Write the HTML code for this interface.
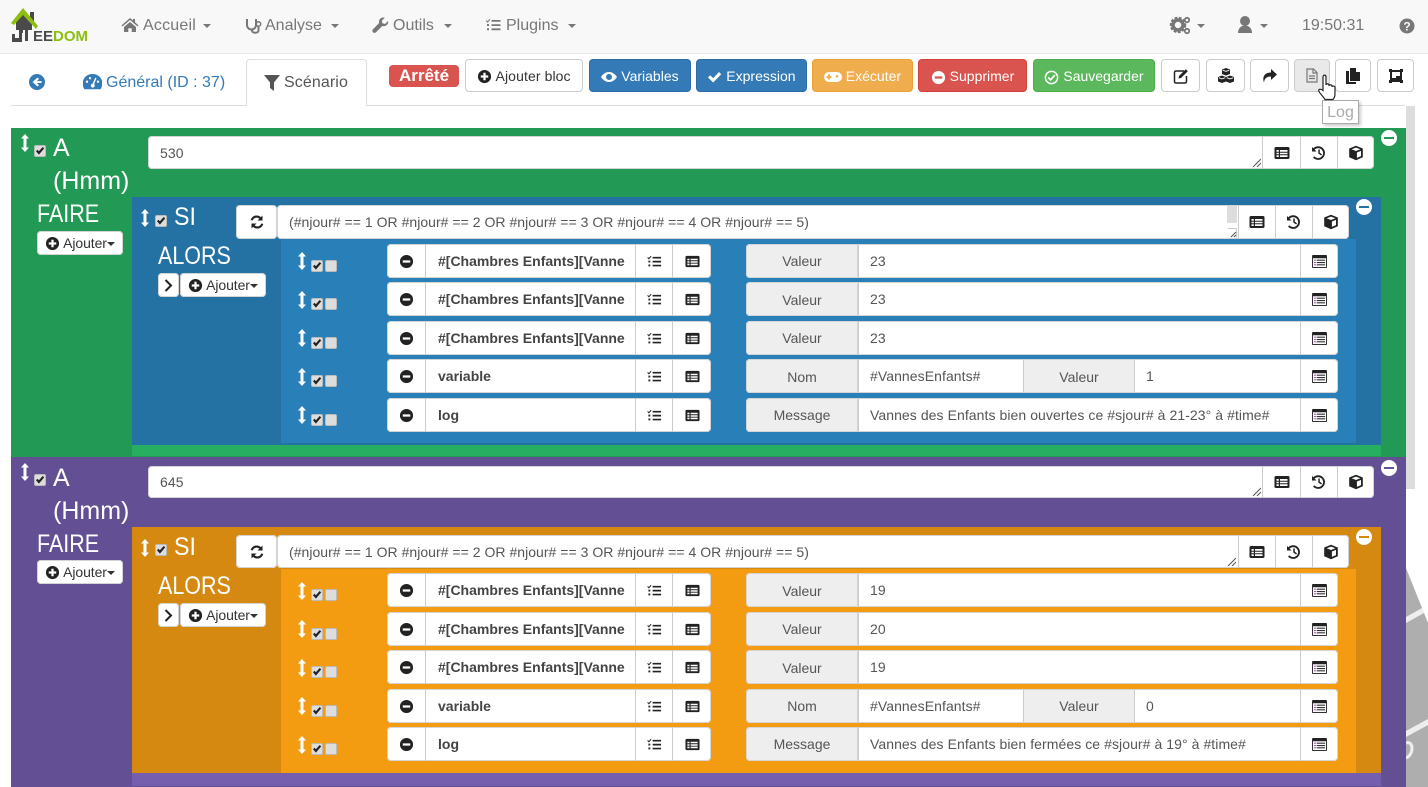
<!DOCTYPE html>
<html><head><meta charset="utf-8"><style>
html,body{margin:0;padding:0;width:1428px;height:787px;overflow:hidden;background:#fff}
body{position:relative;font-family:"Liberation Sans",sans-serif;font-size:14px;color:#555}
.a,.b,.t,.l,.i,.ck,.ar,.row{position:absolute;box-sizing:border-box}
.t{white-space:nowrap}
.b{background:#fff;border:1px solid #ccc;border-radius:4px;color:#333;text-align:center;white-space:nowrap}
.b svg{display:inline-block;vertical-align:middle}
.w{background:#fff;border-radius:4px;box-shadow:inset 0 0 0 1px #d4d4d4}
.s{position:absolute;box-sizing:border-box;border-left:1px solid #ccc;top:0;bottom:0;display:flex;align-items:center;justify-content:center}
.ic{width:16px;height:16px;fill:#222;display:block}
.l{background:#eee;top:0;bottom:0;border-left:1px solid #ccc;text-align:center;line-height:34px;color:#555}
.i{top:0;line-height:35px;padding-left:11px;color:#555;white-space:nowrap;overflow:hidden;letter-spacing:.07px}
.ck{width:12px;height:12px;background:#ddd;border:1px solid #bbb;border-radius:2px}
.ck svg{position:absolute;left:0;top:0;width:10px;height:10px;fill:#222}
.ar{width:10px;height:18px;fill:#fff}
.h{color:#fff;font-size:25px;line-height:30px;position:absolute;white-space:nowrap}
.n{transform:scaleX(.86);transform-origin:left center}
.row{left:0;width:1428px;height:34px}
.row>.g{position:absolute;top:0;height:34px}
.nav{color:#777;font-size:16px}
.btn{height:33px;top:59px;line-height:32px;color:#fff;border:1px solid transparent;font-size:14px}
.mc{position:absolute;width:16px;height:16px}
.aj{width:86px;height:24px;line-height:24px;border:0;box-shadow:inset 0 0 0 1px #d4d4d4;font-size:14px;letter-spacing:-.1px}
.aj svg{width:15px;height:15px;margin-top:-2px;fill:#222}
.cr{display:inline-block;border:4px solid transparent;border-top-color:#333;border-bottom:0;vertical-align:middle}
.lo{line-height:36px}
</style></head><body>
<svg width="0" height="0" style="position:absolute"><defs>
<symbol id="minus" viewBox="0 0 16 16"><path d="M8 1a7 7 0 1 0 0 14A7 7 0 0 0 8 1zM4 6.8h8v2.4H4z" fill-rule="evenodd"/></symbol>
<symbol id="plus" viewBox="0 0 16 16"><path d="M8 1a7 7 0 1 0 0 14A7 7 0 0 0 8 1zM6.8 4h2.4v2.8H12v2.4H9.200V12H6.800V9.200H4V6.800h2.800z" fill-rule="evenodd"/></symbol>
<symbol id="tasks" viewBox="0 0 16 16"><path d="M6 3h9v1.800H6zM6 7.200h9V9H6zM6 11.400h9v1.800H6zM1 3.200l1 1 2-2.200.8.700L2 5.800.3 4zM1.500 7h2v2h-2zM1.500 11.200h2v2h-2z"/></symbol>
<symbol id="list" viewBox="0 0 16 16"><path d="M2 2h12a1.500 1.500 0 0 1 1.500 1.500v9A1.500 1.500 0 0 1 14 14H2a1.500 1.500 0 0 1-1.500-1.500v-9A1.500 1.500 0 0 1 2 2zM2.500 5v1.700h2.300V5zM6 5v1.700h7.500V5zM2.500 7.700v1.600h2.300V7.700zM6 7.700v1.600h7.500V7.700zM2.500 10.300V12h2.300v-1.700zM6 10.300V12h7.500v-1.700z" fill-rule="evenodd"/></symbol>
<symbol id="hist" viewBox="0 0 16 16"><path d="M1 2l1.300 1.300A6.800 6.800 0 1 1 2 12.500l1.400-1.100A5 5 0 1 0 3.600 4.600L5.500 6.500H1zM7.300 4.500h1.500v3.200l2.200 1.600-.9 1.200-2.800-2z"/></symbol>
<symbol id="cube" viewBox="0 0 16 16"><path d="M8 .8l6.800 2.700v8.800L8 15.200l-6.800-2.900V3.500zM8 2.600L3.600 4.300 8 6l4.400-1.700zM8.900 7.500v5.400l4.100-1.800V5.900z" fill-rule="evenodd"/></symbol>
<symbol id="arrow" viewBox="0 0 10 18"><path d="M5 0l4 4.500H6.500v9H9L5 18l-4-4.500h2.500v-9H1z"/></symbol>
<symbol id="check" viewBox="0 0 10 10"><path d="M1 5.200l1.500-1.400 1.400 1.500L7.700 1 9.200 2.400 3.900 8.600z"/></symbol>
<symbol id="cal" viewBox="0 0 16 14"><rect x="0" y="0" width="16" height="14" rx="1" fill="#222"/><rect x="1" y="3.500" width="14" height="9.500" fill="#fff"/><path d="M2.300 5h1.700v1.200H2.300zM2.300 7.500h1.700v1.200H2.300zM2.300 10h1.700v1.200H2.300z" fill="#a02ba0"/><path d="M5 5h9v1.200H5zM5 7.500h9v1.200H5zM5 10h9v1.200H5z" fill="#333"/></symbol>
<symbol id="sync" viewBox="0 0 16 16"><path d="M13.500 1.500v5h-5l1.900-1.900A4.200 4.200 0 0 0 3.700 6.500L1.700 6a6.200 6.200 0 0 1 10.200-2.900zM2.500 14.500v-5h5l-1.900 1.900a4.200 4.200 0 0 0 6.700-1.900l2 .5a6.200 6.200 0 0 1-10.200 2.900z"/></symbol>
</defs></svg>

<!-- navbar -->
<div class="a" style="left:0;top:0;width:1428px;height:54px;background:#f8f8f8;border-bottom:1px solid #e7e7e7"></div>
<svg class="a" style="left:10px;top:8px" width="80" height="38" viewBox="0 0 80 38">
<path d="M6 12L13 6l9 9v7H13v3h-2v-3H6z" fill="#4a4a4a"/><rect x="20" y="4" width="4" height="12" fill="#4a4a4a"/>
<path d="M1 15L13 0l15 18-2 3L13 7 4 17z" fill="#8cbf0f"/>
<path d="M2 26h3v4h4V17h3v17H2z" fill="#4a4a4a"/><rect x="9" y="13" width="3" height="3" fill="#4a4a4a"/>
<path d="M15 22h3v11h-3z" fill="#4a4a4a"/>
<text x="23" y="33" font-family="Liberation Sans" font-weight="bold" font-size="15" fill="#4a4a4a" textLength="20">EE</text>
<text x="43" y="33" font-family="Liberation Sans" font-weight="bold" font-size="15" fill="#8cbf0f" textLength="35">DOM</text>
</svg>
<svg class="a" style="left:121px;top:17px;fill:#777" width="18" height="16" viewBox="0 0 18 16"><path d="M9 1l3 2.600V2h2v3.300L17.500 8.400l-1 1L9 3 1.500 9.400l-1-1zM3 10l6-5 6 5v5h-4.300v-3.800H7.300V15H3z"/></svg>
<div class="t nav" style="left:143px;top:16px;line-height:20px;letter-spacing:.2px">Accueil</div>
<svg class="a" style="left:245px;top:17px" width="18" height="17" viewBox="0 0 18 17"><path d="M2 2v6a4.500 4.500 0 0 0 9 0V2M7 12.500v1c0 3 6.500 3 6.500 0V9" fill="none" stroke="#777" stroke-width="2"/><circle cx="13.500" cy="7" r="2.200" fill="none" stroke="#777" stroke-width="1.500"/></svg>
<div class="t nav" style="left:265px;top:16px;line-height:20px">Analyse</div>
<svg class="a" style="left:372px;top:17px;fill:#777" width="17" height="17" viewBox="0 0 17 17"><path d="M16 4l-3 3-2.500-.7L9.800 3.800l3-3C10 0 7.500 1.200 7 4c-.1.800 0 1.500.1 2L1 12.200a2.100 2.100 0 0 0 3 3L10.200 9c3 .9 6.800-1.300 5.800-5z"/></svg>
<div class="t nav" style="left:393px;top:16px;line-height:20px">Outils</div>
<svg class="a" style="left:485px;top:17px;fill:#777" width="17" height="16" viewBox="0 0 16 16"><use href="#tasks"/></svg>
<div class="t nav" style="left:506px;top:16px;line-height:20px">Plugins</div>
<svg class="a" style="left:0;top:0;fill:#777" width="1428" height="54"><path d="M203 24h8l-4 4zM331 24h8l-4 4zM444 24h8l-4 4zM568 24h8l-4 4zM1197 24h8l-4 4zM1260 24h8l-4 4z"/>
<circle cx="1178" cy="25" r="6.500" fill="none" stroke="#777" stroke-width="3.500" stroke-dasharray="2.500 1.400"/><circle cx="1178" cy="25" r="5" fill="none" stroke="#777" stroke-width="3.500"/><circle cx="1187" cy="20" r="2.200" fill="none" stroke="#777" stroke-width="1.800"/><circle cx="1187" cy="31" r="2.200" fill="none" stroke="#777" stroke-width="1.800"/>
<circle cx="1245" cy="21" r="5"/><path d="M1238 33c0-10 14-10 14 0z"/>
<circle cx="1407" cy="26" r="7.500"/><text x="1407" y="30.500" text-anchor="middle" font-family="Liberation Sans" font-weight="bold" font-size="12" fill="#f8f8f8">?</text></svg>
<div class="t" style="left:1302px;top:16px;font-size:16px;line-height:20px;color:#777">19:50:31</div>

<!-- tabs -->
<div class="a" style="left:11px;top:105px;width:1394px;height:1px;background:#ddd"></div>
<div class="a" style="left:246px;top:59px;width:121px;height:47px;background:#fff;border:1px solid #ddd;border-bottom:0;border-radius:4px 4px 0 0"></div>
<svg class="a" style="left:29px;top:74px;fill:#337ab7" width="16" height="16" viewBox="0 0 16 16"><path d="M8 0a8 8 0 1 0 0 16A8 8 0 0 0 8 0zM8.500 3.500L10 5 7.800 7H12.500v2H7.800L10 11l-1.500 1.500L3.500 8z" fill-rule="evenodd"/></svg>
<svg class="a" style="left:83px;top:74px;fill:#337ab7" width="19" height="16" viewBox="0 0 19 16"><path d="M9.500 0A9.500 9.500 0 0 0 1.500 15.200h16A9.500 9.500 0 0 0 9.500 0zM4 6.500a1.200 1.200 0 1 1 0 2.400 1.200 1.200 0 0 1 0-2.400zM7 3a1.200 1.200 0 1 1 0 2.400A1.200 1.200 0 0 1 7 3zM15 6.500a1.200 1.200 0 1 1 0 2.400 1.200 1.200 0 0 1 0-2.400zM12.300 3.500l1.200.6-2.400 6a2 2 0 1 1-1.400-.5z" fill-rule="evenodd"/></svg>
<div class="t" style="left:106px;top:73px;font-size:16px;line-height:20px;color:#337ab7">Général (ID : 37)</div>
<svg class="a" style="left:264px;top:75px;fill:#555" width="16" height="16" viewBox="0 0 16 16"><path d="M0 0h16L10 7.500V16l-4-3V7.500z"/></svg>
<div class="t" style="left:284px;top:73px;font-size:16px;line-height:20px;color:#555;letter-spacing:.1px">Scénario</div>

<!-- toolbar -->
<div class="a" style="left:389px;top:65px;width:70px;height:22px;background:#d9534f;border-radius:4px;color:#fff;font-weight:bold;font-size:17px;line-height:22px;text-align:center">Arrêté</div>
<div class="b" style="left:465px;top:59px;width:118px;height:33px;line-height:32px;letter-spacing:.1px"><svg class="ic" style="display:inline-block;width:15px;height:15px;margin-top:-2px"><use href="#plus"/></svg> Ajouter bloc</div>
<div class="b btn" style="left:589px;width:102px;background:#337ab7;border-color:#2e6da4"><svg width="16" height="14" viewBox="0 0 16 14" fill="#fff"><path d="M8 2C4.500 2 1.500 4.500 0 7c1.500 2.500 4.500 5 8 5s6.500-2.500 8-5c-1.500-2.500-4.500-5-8-5zm0 8a3 3 0 1 1 0-6 3 3 0 0 1 0 6z"/></svg> Variables</div>
<div class="b btn" style="left:696px;width:111px;background:#337ab7;border-color:#2e6da4"><svg width="15" height="14" viewBox="0 0 15 14" fill="#fff"><path d="M1 7.500L3.200 5.300l3 3L12 2l2.200 2.200-8 8.300z"/></svg> Expression</div>
<div class="b btn" style="left:812px;width:101px;background:#f0ad4e;border-color:#eea236"><svg width="18" height="12" viewBox="0 0 18 12" fill="#fff"><path d="M5 1h8a5 5 0 0 1 0 10H5A5 5 0 0 1 5 1zM4 5H2.500v2H4v1.500h2V7h1.500V5H6V3.500H4zM13 4a1.300 1.300 0 1 0 0 2.600A1.300 1.300 0 0 0 13 4z" fill-rule="evenodd"/></svg> Exécuter</div>
<div class="b btn" style="left:918px;width:109px;background:#d9534f;border-color:#d43f3a"><svg width="15" height="15" viewBox="0 0 16 16" fill="#fff"><use href="#minus"/></svg> Supprimer</div>
<div class="b btn" style="left:1033px;width:122px;background:#5cb85c;border-color:#4cae4c"><svg width="15" height="15" viewBox="0 0 16 16"><circle cx="8" cy="8" r="6.500" fill="none" stroke="#fff" stroke-width="1.600"/><path d="M4.500 8l2.500 2.500 4.500-5" fill="none" stroke="#fff" stroke-width="1.800"/></svg> Sauvegarder</div>
<div class="b" style="left:1161px;top:59px;width:39px;height:33px;display:flex;align-items:center;justify-content:center"><svg width="16" height="16" viewBox="0 0 16 16"><path d="M11 3H3a1.500 1.500 0 0 0-1.500 1.500v9A1.500 1.500 0 0 0 3 15h9a1.500 1.500 0 0 0 1.500-1.500V8" fill="none" stroke="#222" stroke-width="1.500"/><path d="M6 8L12.800 1.200l2 2L8 10l-2.500.5z" fill="#222"/></svg></div>
<div class="b" style="left:1206px;top:59px;width:39px;height:33px;display:flex;align-items:center;justify-content:center"><svg width="16" height="15" viewBox="0 0 16 15"><path d="M8 0l4 1.500V6L8 7.500 4 6V1.500zM4 7.500L8 9v4.500L4 15 0 13.500V9zM12 7.500L16 9v4.500L12 15l-4-1.500V9z" fill="#222"/><path d="M4.800 2.200L8 3.400l3.200-1.200M.8 9.700L4 10.900l3.200-1.200M8.800 9.700l3.200 1.200 3.200-1.200" fill="none" stroke="#fff" stroke-width=".9"/></svg></div>
<div class="b" style="left:1250px;top:59px;width:39px;height:33px;display:flex;align-items:center;justify-content:center"><svg width="15" height="14" viewBox="0 0 15 14" fill="#222"><path d="M9 0l6 5.500L9 11V7.500C5 7.500 2.500 9 2 13.500 0 8 2.500 3.500 9 3.500z"/></svg></div>
<div class="b" style="left:1294px;top:59px;width:36px;height:33px;background:#e9e9e9;display:flex;align-items:center;justify-content:center"><svg width="12" height="15" viewBox="0 0 12 15" fill="none" stroke="#777" stroke-width="1.200"><path d="M1 1h6.500L11 4.500V14H1zM7 1v4h4M3 8h6M3 10.500h6"/></svg></div>
<div class="b" style="left:1335px;top:59px;width:36px;height:33px;display:flex;align-items:center;justify-content:center"><svg width="14" height="16" viewBox="0 0 14 16" fill="#222"><path d="M4 0h6v4h4v9H4z"/><path d="M0 3h3v11h7v2H0z"/></svg></div>
<div class="b" style="left:1377px;top:59px;width:37px;height:33px;display:flex;align-items:center;justify-content:center"><svg width="14" height="14" viewBox="0 0 14 14" fill="#222"><path d="M0 0h3v1h8V0h3v3h-1v8h1v3h-3v-1H3v1H0v-3h1V3H0zM3 3v6h4V7h4V3z" fill-rule="evenodd"/></svg></div>

<!-- scrollbar & bg -->
<div class="a" style="left:1406px;top:106px;width:9px;height:383px;background:#ddd"></div>
<svg class="a" style="left:1406px;top:565px" width="22" height="222" viewBox="0 0 22 222"><path d="M0 3L22 58V222H0z" fill="#aeaeae"/><path d="M0 52L16 43l2 5L0 58zM0 166L22 154v6L0 172z" fill="#eee"/><path d="M0 178c8-3 8 12 0 15" fill="none" stroke="#eee" stroke-width="3"/></svg>

<!-- block backgrounds -->
<div class="a" style="left:11px;top:128px;width:1395px;height:329px;background:#229954"></div>
<div class="a" style="left:132px;top:197px;width:1249px;height:248px;background:#2471a3"></div>
<div class="a" style="left:132px;top:445px;width:1249px;height:11px;background:#27ae60"></div>
<div class="a" style="left:281px;top:239px;width:1075px;height:204px;background:#2980b9"></div>
<div class="a" style="left:11px;top:457px;width:1395px;height:330px;background:#634f94"></div>
<div class="a" style="left:132px;top:527px;width:1249px;height:246px;background:#d68910"></div>
<div class="a" style="left:132px;top:773px;width:1249px;height:13px;background:#755eae"></div>
<div class="a" style="left:281px;top:569px;width:1075px;height:204px;background:#f39c12"></div>

<!-- block 1 heads -->
<svg class="ar" style="left:20px;top:134px"><use href="#arrow"/></svg>
<div class="ck" style="left:34px;top:145px"><svg><use href="#check"/></svg></div>
<div class="h" style="left:53px;top:133px">A</div>
<div class="h" style="left:53px;top:166px">(Hmm)</div>
<div class="h n" style="left:37px;top:199px">FAIRE</div>
<div class="a w" style="left:148px;top:136px;width:1226px;height:33px"><span class="i" style="left:1px;font-size:14px">530</span>
<svg class="a" style="left:1104px;top:22px" width="9" height="9"><path d="M1 9L9 1M5 9l4-4" stroke="#555"/></svg>
<span class="s" style="left:1114px;width:38px"><svg class="ic"><use href="#list"/></svg></span><span class="s" style="left:1152px;width:37px"><svg class="ic"><use href="#hist"/></svg></span><span class="s" style="left:1189px;width:37px"><svg class="ic"><use href="#cube"/></svg></span></div>
<div class="mc" style="left:1381px;top:130px;background:#fff;border-radius:50%"><div class="a" style="left:3px;top:7px;width:10px;height:2px;background:#229954"></div></div>
<div class="b aj" style="left:37px;top:231px"><svg><use href="#plus"/></svg> Ajouter<span class="cr"></span></div>

<svg class="ar" style="left:140px;top:209px"><use href="#arrow"/></svg>
<div class="ck" style="left:155px;top:215px"><svg><use href="#check"/></svg></div>
<div class="h n" style="left:174px;top:202px;transform:scaleX(.93)">SI</div>
<div class="h n" style="left:158px;top:241px">ALORS</div>
<div class="a w" style="left:236px;top:205px;width:41px;height:34px;display:flex;align-items:center;justify-content:center"><svg class="ic"><use href="#sync"/></svg></div>
<div class="a w" style="left:277px;top:205px;width:1072px;height:34px"><span class="i" style="left:1px;letter-spacing:.03px">(#njour# == 1 OR #njour# == 2 OR #njour# == 3 OR #njour# == 4 OR #njour# == 5)</span>
<div class="a" style="left:950px;top:1px;width:10px;height:17px;background:#ddd"></div>
<svg class="a" style="left:950px;top:23px;background:#fff" width="10" height="10"><path d="M.5.500h9v9" fill="none" stroke="#ccc"/><path d="M4 9L9 4M7 9l2-2" stroke="#555"/></svg>
<span class="s" style="left:961px;width:37px"><svg class="ic"><use href="#list"/></svg></span><span class="s" style="left:998px;width:37px"><svg class="ic"><use href="#hist"/></svg></span><span class="s" style="left:1035px;width:37px"><svg class="ic"><use href="#cube"/></svg></span></div>
<div class="mc" style="left:1356px;top:199px;background:#fff;border-radius:50%"><div class="a" style="left:3px;top:7px;width:10px;height:2px;background:#2471a3"></div></div>
<div class="b" style="left:158px;top:273px;width:21px;height:24px;border:0;box-shadow:inset 0 0 0 1px #d4d4d4;display:flex;align-items:center;justify-content:center"><svg width="9" height="13" viewBox="0 0 9 13"><path d="M1.500 1l5.500 5.500L1.500 12" fill="none" stroke="#222" stroke-width="2"/></svg></div>
<div class="b aj" style="left:180px;top:273px"><svg><use href="#plus"/></svg> Ajouter<span class="cr"></span></div>

<!-- block 2 heads -->
<svg class="ar" style="left:20px;top:463px"><use href="#arrow"/></svg>
<div class="ck" style="left:34px;top:474px"><svg><use href="#check"/></svg></div>
<div class="h" style="left:53px;top:463px">A</div>
<div class="h" style="left:53px;top:496px">(Hmm)</div>
<div class="h n" style="left:37px;top:529px">FAIRE</div>
<div class="a w" style="left:148px;top:466px;width:1226px;height:32px"><span class="i" style="left:1px;line-height:32px">645</span>
<svg class="a" style="left:1104px;top:21px" width="9" height="9"><path d="M1 9L9 1M5 9l4-4" stroke="#555"/></svg>
<span class="s" style="left:1114px;width:38px"><svg class="ic"><use href="#list"/></svg></span><span class="s" style="left:1152px;width:37px"><svg class="ic"><use href="#hist"/></svg></span><span class="s" style="left:1189px;width:37px"><svg class="ic"><use href="#cube"/></svg></span></div>
<div class="mc" style="left:1381px;top:460px;background:#fff;border-radius:50%"><div class="a" style="left:3px;top:7px;width:10px;height:2px;background:#634f94"></div></div>
<div class="b aj" style="left:37px;top:560px"><svg><use href="#plus"/></svg> Ajouter<span class="cr"></span></div>

<svg class="ar" style="left:140px;top:539px"><use href="#arrow"/></svg>
<div class="ck" style="left:155px;top:544px"><svg><use href="#check"/></svg></div>
<div class="h n" style="left:174px;top:532px;transform:scaleX(.93)">SI</div>
<div class="h n" style="left:158px;top:571px">ALORS</div>
<div class="a w" style="left:236px;top:535px;width:41px;height:33px;display:flex;align-items:center;justify-content:center"><svg class="ic"><use href="#sync"/></svg></div>
<div class="a w" style="left:277px;top:535px;width:1072px;height:33px"><span class="i" style="left:1px;line-height:34px;letter-spacing:.03px">(#njour# == 1 OR #njour# == 2 OR #njour# == 3 OR #njour# == 4 OR #njour# == 5)</span>
<svg class="a" style="left:950px;top:22px" width="9" height="9"><path d="M1 9L9 1M5 9l4-4" stroke="#555"/></svg>
<span class="s" style="left:961px;width:37px"><svg class="ic"><use href="#list"/></svg></span><span class="s" style="left:998px;width:37px"><svg class="ic"><use href="#hist"/></svg></span><span class="s" style="left:1035px;width:37px"><svg class="ic"><use href="#cube"/></svg></span></div>
<div class="mc" style="left:1356px;top:529px;background:#fff;border-radius:50%"><div class="a" style="left:3px;top:7px;width:10px;height:2px;background:#d68910"></div></div>
<div class="b" style="left:158px;top:603px;width:21px;height:24px;border:0;box-shadow:inset 0 0 0 1px #d4d4d4;display:flex;align-items:center;justify-content:center"><svg width="9" height="13" viewBox="0 0 9 13"><path d="M1.500 1l5.500 5.500L1.500 12" fill="none" stroke="#222" stroke-width="2"/></svg></div>
<div class="b aj" style="left:180px;top:603px"><svg><use href="#plus"/></svg> Ajouter<span class="cr"></span></div>

<!-- rows block 1 -->
<div class="row" style="top:244px"><svg class="ar" style="left:297px;top:8px"><use href="#arrow"/></svg><div class="ck" style="left:311px;top:16px"><svg><use href="#check"/></svg></div><div class="ck" style="left:325px;top:16px"></div>
<div class="g w" style="left:387px;width:324px"><span class="s" style="left:0;width:38px;border:0"><svg class="ic" style="width:15px;height:15px"><use href="#minus"/></svg></span><span class="s" style="left:38px;width:210px;justify-content:flex-start;padding-left:12px;font-weight:bold;color:#444;overflow:hidden;white-space:nowrap">#[Chambres Enfants][Vanne</span><span class="s" style="left:248px;width:37px"><svg class="ic" style="width:15px;height:15px"><use href="#tasks"/></svg></span><span class="s" style="left:285px;width:39px"><svg class="ic" style="width:15px;height:15px"><use href="#list"/></svg></span></div>
<div class="g w" style="left:746px;width:592px"><span class="l" style="left:0;width:112px;border:0;border-radius:4px 0 0 4px;box-shadow:inset 0 0 0 1px #d4d4d4">Valeur</span><span class="i" style="left:112px;width:442px;border-left:1px solid #ccc;height:33px">23</span><span class="s" style="left:554px;width:38px"><svg style="width:15px;height:13px"><use href="#cal"/></svg></span></div></div>
<div class="row" style="top:282px"><svg class="ar" style="left:297px;top:9px"><use href="#arrow"/></svg><div class="ck" style="left:311px;top:16px"><svg><use href="#check"/></svg></div><div class="ck" style="left:325px;top:16px"></div>
<div class="g w" style="left:387px;width:324px"><span class="s" style="left:0;width:38px;border:0"><svg class="ic" style="width:15px;height:15px"><use href="#minus"/></svg></span><span class="s" style="left:38px;width:210px;justify-content:flex-start;padding-left:12px;font-weight:bold;color:#444;overflow:hidden;white-space:nowrap">#[Chambres Enfants][Vanne</span><span class="s" style="left:248px;width:37px"><svg class="ic" style="width:15px;height:15px"><use href="#tasks"/></svg></span><span class="s" style="left:285px;width:39px"><svg class="ic" style="width:15px;height:15px"><use href="#list"/></svg></span></div>
<div class="g w" style="left:746px;width:592px"><span class="l lo" style="left:0;width:112px;border:0;border-radius:4px 0 0 4px;box-shadow:inset 0 0 0 1px #d4d4d4">Valeur</span><span class="i" style="left:112px;width:442px;border-left:1px solid #ccc;height:33px">23</span><span class="s" style="left:554px;width:38px"><svg style="width:15px;height:13px"><use href="#cal"/></svg></span></div></div>
<div class="row" style="top:321px"><svg class="ar" style="left:297px;top:8px"><use href="#arrow"/></svg><div class="ck" style="left:311px;top:16px"><svg><use href="#check"/></svg></div><div class="ck" style="left:325px;top:16px"></div>
<div class="g w" style="left:387px;width:324px"><span class="s" style="left:0;width:38px;border:0"><svg class="ic" style="width:15px;height:15px"><use href="#minus"/></svg></span><span class="s" style="left:38px;width:210px;justify-content:flex-start;padding-left:12px;font-weight:bold;color:#444;overflow:hidden;white-space:nowrap">#[Chambres Enfants][Vanne</span><span class="s" style="left:248px;width:37px"><svg class="ic" style="width:15px;height:15px"><use href="#tasks"/></svg></span><span class="s" style="left:285px;width:39px"><svg class="ic" style="width:15px;height:15px"><use href="#list"/></svg></span></div>
<div class="g w" style="left:746px;width:592px"><span class="l" style="left:0;width:112px;border:0;border-radius:4px 0 0 4px;box-shadow:inset 0 0 0 1px #d4d4d4">Valeur</span><span class="i" style="left:112px;width:442px;border-left:1px solid #ccc;height:33px">23</span><span class="s" style="left:554px;width:38px"><svg style="width:15px;height:13px"><use href="#cal"/></svg></span></div></div>
<div class="row" style="top:359px"><svg class="ar" style="left:297px;top:9px"><use href="#arrow"/></svg><div class="ck" style="left:311px;top:16px"><svg><use href="#check"/></svg></div><div class="ck" style="left:325px;top:16px"></div>
<div class="g w" style="left:387px;width:324px"><span class="s" style="left:0;width:38px;border:0"><svg class="ic" style="width:15px;height:15px"><use href="#minus"/></svg></span><span class="s" style="left:38px;width:210px;justify-content:flex-start;padding-left:12px;font-weight:bold;color:#444">variable</span><span class="s" style="left:248px;width:37px"><svg class="ic" style="width:15px;height:15px"><use href="#tasks"/></svg></span><span class="s" style="left:285px;width:39px"><svg class="ic" style="width:15px;height:15px"><use href="#list"/></svg></span></div>
<div class="g w" style="left:746px;width:592px"><span class="l lo" style="left:0;width:112px;border:0;border-radius:4px 0 0 4px;box-shadow:inset 0 0 0 1px #d4d4d4">Nom</span><span class="i" style="left:112px;width:165px;border-left:1px solid #ccc;height:33px">#VannesEnfants#</span><span class="l" style="left:277px;width:112px;bottom:1px;top:1px;border-right:1px solid #ccc;line-height:34px">Valeur</span><span class="i" style="left:389px;width:165px">1</span><span class="s" style="left:554px;width:38px"><svg style="width:15px;height:13px"><use href="#cal"/></svg></span></div></div>
<div class="row" style="top:398px"><svg class="ar" style="left:297px;top:8px"><use href="#arrow"/></svg><div class="ck" style="left:311px;top:16px"><svg><use href="#check"/></svg></div><div class="ck" style="left:325px;top:16px"></div>
<div class="g w" style="left:387px;width:324px"><span class="s" style="left:0;width:38px;border:0"><svg class="ic" style="width:15px;height:15px"><use href="#minus"/></svg></span><span class="s" style="left:38px;width:210px;justify-content:flex-start;padding-left:12px;font-weight:bold;color:#444">log</span><span class="s" style="left:248px;width:37px"><svg class="ic" style="width:15px;height:15px"><use href="#tasks"/></svg></span><span class="s" style="left:285px;width:39px"><svg class="ic" style="width:15px;height:15px"><use href="#list"/></svg></span></div>
<div class="g w" style="left:746px;width:592px"><span class="l" style="left:0;width:112px;border:0;border-radius:4px 0 0 4px;box-shadow:inset 0 0 0 1px #d4d4d4">Message</span><span class="i" style="left:112px;width:442px;border-left:1px solid #ccc;height:33px">Vannes des Enfants bien ouvertes ce #sjour# à 21-23° à #time#</span><span class="s" style="left:554px;width:38px"><svg style="width:15px;height:13px"><use href="#cal"/></svg></span></div></div>

<!-- rows block 2 -->
<div class="row" style="top:573px"><svg class="ar" style="left:297px;top:9px"><use href="#arrow"/></svg><div class="ck" style="left:311px;top:16px"><svg><use href="#check"/></svg></div><div class="ck" style="left:325px;top:16px"></div>
<div class="g w" style="left:387px;width:324px"><span class="s" style="left:0;width:38px;border:0"><svg class="ic" style="width:15px;height:15px"><use href="#minus"/></svg></span><span class="s" style="left:38px;width:210px;justify-content:flex-start;padding-left:12px;font-weight:bold;color:#444;overflow:hidden;white-space:nowrap">#[Chambres Enfants][Vanne</span><span class="s" style="left:248px;width:37px"><svg class="ic" style="width:15px;height:15px"><use href="#tasks"/></svg></span><span class="s" style="left:285px;width:39px"><svg class="ic" style="width:15px;height:15px"><use href="#list"/></svg></span></div>
<div class="g w" style="left:746px;width:592px"><span class="l lo" style="left:0;width:112px;border:0;border-radius:4px 0 0 4px;box-shadow:inset 0 0 0 1px #d4d4d4">Valeur</span><span class="i" style="left:112px;width:442px;border-left:1px solid #ccc;height:33px">19</span><span class="s" style="left:554px;width:38px"><svg style="width:15px;height:13px"><use href="#cal"/></svg></span></div></div>
<div class="row" style="top:612px"><svg class="ar" style="left:297px;top:8px"><use href="#arrow"/></svg><div class="ck" style="left:311px;top:16px"><svg><use href="#check"/></svg></div><div class="ck" style="left:325px;top:16px"></div>
<div class="g w" style="left:387px;width:324px"><span class="s" style="left:0;width:38px;border:0"><svg class="ic" style="width:15px;height:15px"><use href="#minus"/></svg></span><span class="s" style="left:38px;width:210px;justify-content:flex-start;padding-left:12px;font-weight:bold;color:#444;overflow:hidden;white-space:nowrap">#[Chambres Enfants][Vanne</span><span class="s" style="left:248px;width:37px"><svg class="ic" style="width:15px;height:15px"><use href="#tasks"/></svg></span><span class="s" style="left:285px;width:39px"><svg class="ic" style="width:15px;height:15px"><use href="#list"/></svg></span></div>
<div class="g w" style="left:746px;width:592px"><span class="l" style="left:0;width:112px;border:0;border-radius:4px 0 0 4px;box-shadow:inset 0 0 0 1px #d4d4d4">Valeur</span><span class="i" style="left:112px;width:442px;border-left:1px solid #ccc;height:33px">20</span><span class="s" style="left:554px;width:38px"><svg style="width:15px;height:13px"><use href="#cal"/></svg></span></div></div>
<div class="row" style="top:650px"><svg class="ar" style="left:297px;top:9px"><use href="#arrow"/></svg><div class="ck" style="left:311px;top:16px"><svg><use href="#check"/></svg></div><div class="ck" style="left:325px;top:16px"></div>
<div class="g w" style="left:387px;width:324px"><span class="s" style="left:0;width:38px;border:0"><svg class="ic" style="width:15px;height:15px"><use href="#minus"/></svg></span><span class="s" style="left:38px;width:210px;justify-content:flex-start;padding-left:12px;font-weight:bold;color:#444;overflow:hidden;white-space:nowrap">#[Chambres Enfants][Vanne</span><span class="s" style="left:248px;width:37px"><svg class="ic" style="width:15px;height:15px"><use href="#tasks"/></svg></span><span class="s" style="left:285px;width:39px"><svg class="ic" style="width:15px;height:15px"><use href="#list"/></svg></span></div>
<div class="g w" style="left:746px;width:592px"><span class="l lo" style="left:0;width:112px;border:0;border-radius:4px 0 0 4px;box-shadow:inset 0 0 0 1px #d4d4d4">Valeur</span><span class="i" style="left:112px;width:442px;border-left:1px solid #ccc;height:33px">19</span><span class="s" style="left:554px;width:38px"><svg style="width:15px;height:13px"><use href="#cal"/></svg></span></div></div>
<div class="row" style="top:689px"><svg class="ar" style="left:297px;top:8px"><use href="#arrow"/></svg><div class="ck" style="left:311px;top:16px"><svg><use href="#check"/></svg></div><div class="ck" style="left:325px;top:16px"></div>
<div class="g w" style="left:387px;width:324px"><span class="s" style="left:0;width:38px;border:0"><svg class="ic" style="width:15px;height:15px"><use href="#minus"/></svg></span><span class="s" style="left:38px;width:210px;justify-content:flex-start;padding-left:12px;font-weight:bold;color:#444">variable</span><span class="s" style="left:248px;width:37px"><svg class="ic" style="width:15px;height:15px"><use href="#tasks"/></svg></span><span class="s" style="left:285px;width:39px"><svg class="ic" style="width:15px;height:15px"><use href="#list"/></svg></span></div>
<div class="g w" style="left:746px;width:592px"><span class="l" style="left:0;width:112px;border:0;border-radius:4px 0 0 4px;box-shadow:inset 0 0 0 1px #d4d4d4">Nom</span><span class="i" style="left:112px;width:165px;border-left:1px solid #ccc;height:33px">#VannesEnfants#</span><span class="l" style="left:277px;width:112px;bottom:1px;top:1px;border-right:1px solid #ccc;line-height:32px">Valeur</span><span class="i" style="left:389px;width:165px">0</span><span class="s" style="left:554px;width:38px"><svg style="width:15px;height:13px"><use href="#cal"/></svg></span></div></div>
<div class="row" style="top:727px"><svg class="ar" style="left:297px;top:9px"><use href="#arrow"/></svg><div class="ck" style="left:311px;top:16px"><svg><use href="#check"/></svg></div><div class="ck" style="left:325px;top:16px"></div>
<div class="g w" style="left:387px;width:324px"><span class="s" style="left:0;width:38px;border:0"><svg class="ic" style="width:15px;height:15px"><use href="#minus"/></svg></span><span class="s" style="left:38px;width:210px;justify-content:flex-start;padding-left:12px;font-weight:bold;color:#444">log</span><span class="s" style="left:248px;width:37px"><svg class="ic" style="width:15px;height:15px"><use href="#tasks"/></svg></span><span class="s" style="left:285px;width:39px"><svg class="ic" style="width:15px;height:15px"><use href="#list"/></svg></span></div>
<div class="g w" style="left:746px;width:592px"><span class="l" style="left:0;width:112px;border:0;border-radius:4px 0 0 4px;box-shadow:inset 0 0 0 1px #d4d4d4">Message</span><span class="i" style="left:112px;width:442px;border-left:1px solid #ccc;height:33px">Vannes des Enfants bien fermées ce #sjour# à 19° à #time#</span><span class="s" style="left:554px;width:38px"><svg style="width:15px;height:13px"><use href="#cal"/></svg></span></div></div>

<!-- tooltip + cursor -->
<div class="a" style="left:1322px;top:100px;width:37px;height:24px;background:#fff;border:1px solid #aaa;box-shadow:2px 2px 3px rgba(0,0,0,.2);color:#aaa;font-size:16px;line-height:23px;text-align:center">Log</div>
<svg class="a" style="left:1318px;top:74px" width="20" height="28" viewBox="0 0 20 28"><path d="M5 3c0-2.500 3-2.500 3 0v8c0-1.500 3-1.500 3 0v1c0-1.500 3-1.500 3 0v1c0-1.300 3-1.300 3 .5v6c0 3-1 5-2 6H7c-1-2-5-6-6-8-1-2 1-3.500 4-1z" fill="#fff" stroke="#222" stroke-width="1.200"/></svg>
</body></html>
